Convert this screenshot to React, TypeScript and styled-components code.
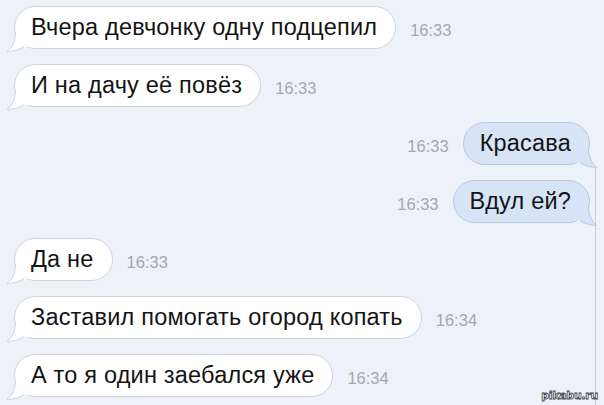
import styled, { createGlobalStyle } from "styled-components";

interface Message {
  id: number;
  text: string;
  time: string;
  mine?: boolean;
}

const messages: Message[] = [
  { id: 1, text: "Вчера девчонку одну подцепил", time: "16:33" },
  { id: 2, text: "И на дачу её повёз", time: "16:33" },
  { id: 3, text: "Красава", time: "16:33", mine: true },
  { id: 4, text: "Вдул ей?", time: "16:33", mine: true },
  { id: 5, text: "Да не", time: "16:33" },
  { id: 6, text: "Заставил помогать огород копать", time: "16:34" },
  { id: 7, text: "А то я один заебался уже", time: "16:34" },
];

const GlobalStyle = createGlobalStyle`
  html, body {
    margin: 0;
    padding: 0;
    background: #edf2f9;
  }
`;

const Screen = styled.div`
  position: relative;
  width: 604px;
  height: 405px;
  overflow: hidden;
  background: #edf2f9;
  font-family: "Liberation Sans", Arial, sans-serif;
  padding-top: 6px;
  box-sizing: border-box;
  display: flex;
  flex-direction: column;
  gap: 15px;
`;

const Row = styled.div<{ $mine?: boolean }>`
  display: flex;
  align-items: center;
  flex-direction: ${(p) => (p.$mine ? "row-reverse" : "row")};
  padding: 0 14px;
  gap: 14px;
`;

const Bubble = styled.div<{ $mine?: boolean }>`
  position: relative;
  height: 43px;
  box-sizing: border-box;
  display: flex;
  align-items: center;
  padding: 0 18px 0 16px;
  border-radius: 22px;
  font-size: 23.5px;
  letter-spacing: 0.2px;
  color: #141414;
  background: ${(p) => (p.$mine ? "#d6e4f6" : "#ffffff")};
  border: 1px solid ${(p) => (p.$mine ? "#b9c9de" : "#cfd3d9")};
  white-space: nowrap;
`;

const Tail = styled.svg<{ $mine?: boolean }>`
  position: absolute;
  bottom: -4px;
  width: 24px;
  height: 22px;
  ${(p) => (p.$mine ? "right: -9px; transform: scaleX(-1);" : "left: -9px;")}
`;

const Time = styled.span`
  font-size: 16.5px;
  color: #a3a8af;
  margin-top: 6px;
`;

const ScrollLine = styled.div`
  position: absolute;
  left: 595px;
  top: 167px;
  bottom: 0;
  width: 1px;
  background: #cbd0d8;
`;

const Watermark = styled.div`
  position: absolute;
  right: 6px;
  bottom: 3px;
  font-family: "DejaVu Sans", sans-serif;
  font-size: 11px;
  font-weight: bold;
  color: #ffffff;
  -webkit-text-stroke: 0.8px #3a3f47;
  letter-spacing: -0.3px;
`;

const BubbleTail = ({ mine }: { mine?: boolean }) => {
  const fill = mine ? "#d6e4f6" : "#ffffff";
  const stroke = mine ? "#b9c9de" : "#cfd3d9";
  return (
    <Tail $mine={mine} viewBox="0 0 24 22">
      <path d="M9.5 2 C9.5 11 6 18 1 21.5 C7 21.5 13 20 18 16.5 L24 17 L24 2 Z" fill={fill} />
      <path d="M9.5 2 C9.5 11 6 18 1 21.5 C7 21.5 13 20 18 16.5" fill="none" stroke={stroke} strokeWidth="1" />
    </Tail>
  );
};

export default function App() {
  return (
    <Screen>
      <GlobalStyle />
      {messages.map((m) => (
        <Row key={m.id} $mine={m.mine}>
          <Bubble $mine={m.mine}>
            {m.text}
            <BubbleTail mine={m.mine} />
          </Bubble>
          <Time>{m.time}</Time>
        </Row>
      ))}
      <ScrollLine />
      <Watermark>pikabu.ru</Watermark>
    </Screen>
  );
}
